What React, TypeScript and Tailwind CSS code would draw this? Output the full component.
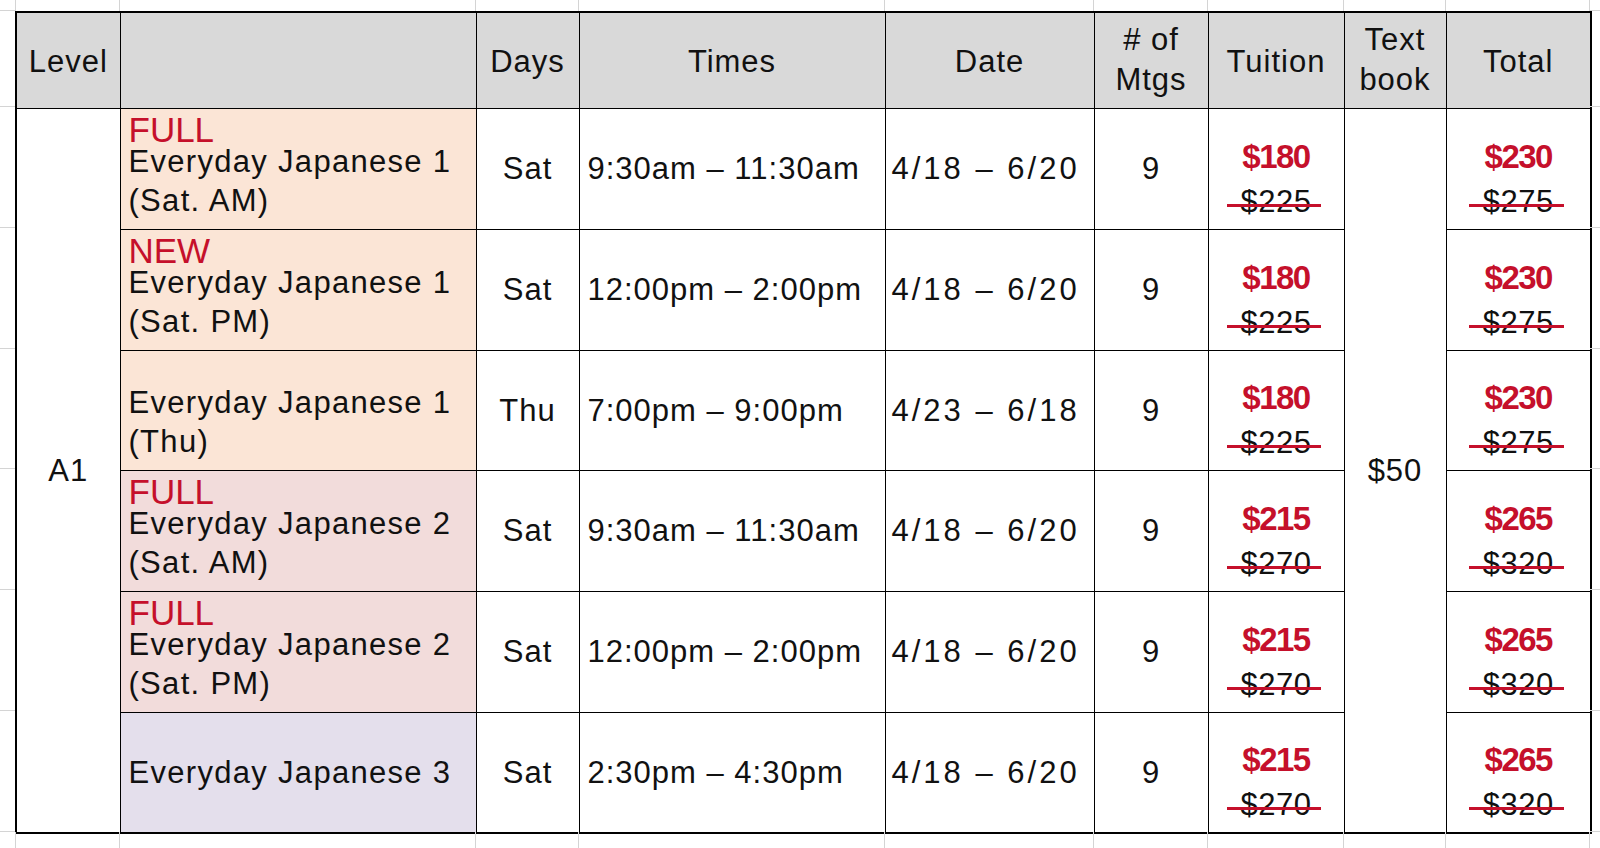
import React from "react";

const RED = "text-[#c5102b]";

type Row = {
  label: string;
  name: string;
  sub?: string;
  bg: string;
  h: string;
  day: string;
  time: string;
  date: string;
  tu: [string, string];
  to: [string, string];
};

const rows: Row[] = [
  { label: "FULL", name: "Everyday Japanese 1", sub: "(Sat. AM)", bg: "bg-[#fbe5d6]", h: "h-[121px]", day: "Sat", time: "9:30am – 11:30am", date: "4/18 – 6/20", tu: ["$180", "$225"], to: ["$230", "$275"] },
  { label: "NEW", name: "Everyday Japanese 1", sub: "(Sat. PM)", bg: "bg-[#fbe5d6]", h: "h-[121px]", day: "Sat", time: "12:00pm – 2:00pm", date: "4/18 – 6/20", tu: ["$180", "$225"], to: ["$230", "$275"] },
  { label: "", name: "Everyday Japanese 1", sub: "(Thu)", bg: "bg-[#fbe5d6]", h: "h-[120px]", day: "Thu", time: "7:00pm – 9:00pm", date: "4/23 – 6/18", tu: ["$180", "$225"], to: ["$230", "$275"] },
  { label: "FULL", name: "Everyday Japanese 2", sub: "(Sat. AM)", bg: "bg-[#f2dcdb]", h: "h-[121px]", day: "Sat", time: "9:30am – 11:30am", date: "4/18 – 6/20", tu: ["$215", "$270"], to: ["$265", "$320"] },
  { label: "FULL", name: "Everyday Japanese 2", sub: "(Sat. PM)", bg: "bg-[#f2dcdb]", h: "h-[121px]", day: "Sat", time: "12:00pm – 2:00pm", date: "4/18 – 6/20", tu: ["$215", "$270"], to: ["$265", "$320"] },
  { label: "", name: "Everyday Japanese 3", bg: "bg-[#e4dfec]", h: "h-[121px]", day: "Sat", time: "2:30pm – 4:30pm", date: "4/18 – 6/20", tu: ["$215", "$270"], to: ["$265", "$320"] },
];

const colW = ["w-[104px]", "w-[356px]", "w-[103px]", "w-[306px]", "w-[209px]", "w-[114px]", "w-[136px]", "w-[102px]", "w-[145px]"];
const rowH = ["h-[96px]", "h-[121px]", "h-[121px]", "h-[120px]", "h-[121px]", "h-[121px]", "h-[121px]"];

function Price({ now, was }: { now: string; was: string }) {
  return (
    <div className="flex flex-col items-center pt-[20px]">
      <span className={`font-bold text-[33px] tracking-[-1.5px] leading-[45px] ${RED}`}>{now}</span>
      <span className="relative leading-[45px] tracking-[0.5px]">
        {was}
        <span className="absolute left-[-14px] right-[-10px] top-[25px] h-[3px] bg-[#c5102b]" />
      </span>
    </div>
  );
}

const cell = "border border-black p-0";

export default function App() {
  return (
    <div className="w-[1600px] h-[848px] overflow-hidden bg-white grid grid-cols-[15px_1575px_10px] grid-rows-[11px_821px_16px] font-['Liberation_Sans',Arial,sans-serif] text-[31px] tracking-[1px] text-[#111]">
      <div className="border-b border-[#d4d4d4]" />
      <div className="flex">
        {colW.map((w, i) => (
          <div key={i} className={`${w} shrink-0 border-l border-[#d4d4d4] ${i === colW.length - 1 ? "border-r" : ""}`} />
        ))}
      </div>
      <div className="border-b border-[#d4d4d4]" />

      <div className="flex flex-col">
        {rowH.map((h, i) => (
          <div key={i} className={`${h} shrink-0 border-b border-[#d4d4d4]`} />
        ))}
      </div>

      <table className="table-fixed border-collapse border-2 border-black w-[1575px] h-[821px]">
        <colgroup>
          {colW.map((w, i) => (
            <col key={i} className={w} />
          ))}
        </colgroup>
        <thead>
          <tr className="h-[96px] bg-[#d9d9d9] text-center leading-[40px]">
            <th className={`${cell} font-normal pt-[3px]`}>Level</th>
            <th className={`${cell} font-normal`}></th>
            <th className={`${cell} font-normal pt-[3px]`}>Days</th>
            <th className={`${cell} font-normal pt-[3px]`}>Times</th>
            <th className={`${cell} font-normal pt-[3px]`}>Date</th>
            <th className={`${cell} font-normal`}>
              <div>#&nbsp;of</div>
              <div>Mtgs</div>
            </th>
            <th className={`${cell} font-normal pt-[3px]`}>Tuition</th>
            <th className={`${cell} font-normal`}>
              <div>Text</div>
              <div>book</div>
            </th>
            <th className={`${cell} font-normal pt-[3px]`}>Total</th>
          </tr>
        </thead>
        <tbody>
          {rows.map((r, i) => (
            <tr key={i} className={`${r.h} leading-[39px]`}>
              {i === 0 && (
                <td rowSpan={6} className={`${cell} text-center align-middle`}>
                  A1
                </td>
              )}
              <td className={`${cell} ${r.bg} pl-2 align-middle whitespace-nowrap tracking-[1.3px]`}>
                {r.sub ? (
                  <div className="flex flex-col">
                    <span className={`text-[35px] tracking-[0px] leading-[24px] ${RED}`}>{r.label || "\u00a0"}</span>
                    <span>{r.name}</span>
                    <span>{r.sub}</span>
                  </div>
                ) : (
                  <div>{r.name}</div>
                )}
              </td>
              <td className={`${cell} text-center align-middle`}>{r.day}</td>
              <td className={`${cell} pl-2 align-middle whitespace-nowrap`}>{r.time}</td>
              <td className={`${cell} pl-[6px] align-middle whitespace-nowrap tracking-[3px]`}>{r.date}</td>
              <td className={`${cell} text-center align-middle`}>9</td>
              <td className={`${cell} align-middle`}>
                <Price now={r.tu[0]} was={r.tu[1]} />
              </td>
              {i === 0 && (
                <td rowSpan={6} className={`${cell} text-center align-middle`}>
                  $50
                </td>
              )}
              <td className={`${cell} align-middle`}>
                <Price now={r.to[0]} was={r.to[1]} />
              </td>
            </tr>
          ))}
        </tbody>
      </table>

      <div className="flex flex-col">
        {rowH.map((h, i) => (
          <div key={i} className={`${h} shrink-0 border-b border-[#d4d4d4]`} />
        ))}
      </div>

      <div />
      <div className="flex">
        {colW.map((w, i) => (
          <div key={i} className={`${w} shrink-0 border-l border-[#d4d4d4] ${i === colW.length - 1 ? "border-r" : ""}`} />
        ))}
      </div>
      <div />
    </div>
  );
}
